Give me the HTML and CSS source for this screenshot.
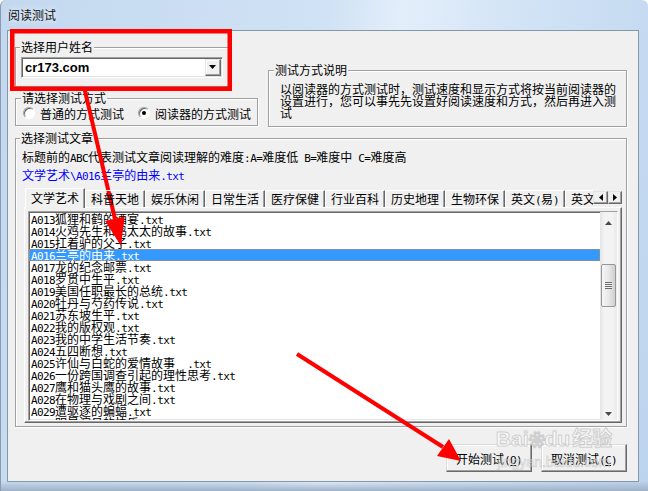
FILE: index.html
```
<!DOCTYPE html>
<html lang="zh-CN">
<head>
    <meta charset="UTF-8">
    <meta name="viewport" content="width=device-width, initial-scale=1.0">
    <title>阅读测试</title>
    <link rel="stylesheet" href="styles.css">
</head>
<body>
<div class="window">
    <div class="titlebar">阅读测试</div>
    <div class="client">
        <div class="top">
            <div class="left-col">
                <fieldset class="grp grp-user">
                    <legend>选择用户姓名</legend>
                    <div class="combo">
                        <span class="combo-text">cr173.com</span>
                        <span class="combo-btn">
                            <svg width="8" height="5" viewBox="0 0 8 5"><path d="M0 0h7L3.5 4z" fill="#000"/></svg>
                        </span>
                    </div>
                </fieldset>
                <fieldset class="grp grp-mode">
                    <legend>请选择测试方式</legend>
                    <div class="radios">
                        <label class="radio"><span class="dot"></span>普通的方式测试</label>
                        <label class="radio second"><span class="dot on"></span>阅读器的方式测试</label>
                    </div>
                </fieldset>
            </div>
            <fieldset class="grp grp-note">
                <legend>测试方式说明</legend>
                <p>以阅读器的方式测试时，测试速度和显示方式将按当前阅读器的设置进行，您可以事先先设置好阅读速度和方式，然后再进入测试</p>
            </fieldset>
        </div>

        <fieldset class="grp grp-article">
            <legend>选择测试文章</legend>
            <div class="hint">标题前的<span class="n">ABC</span>代表测试文章阅读理解的难度<span class="n">:A=</span>难度低<span class="n"> B=</span>难度中<span class="n"> C=</span>难度高</div>
            <div class="path">文学艺术<span class="n">\A016</span>兰亭的由来<span class="n">.txt</span></div>

            <div class="tabs-row">
                <div class="tabs">
                    <div class="tab active">文学艺术</div>
                    <div class="tab">科普天地</div>
                    <div class="tab">娱乐休闲</div>
                    <div class="tab">日常生活</div>
                    <div class="tab">医疗保健</div>
                    <div class="tab">行业百科</div>
                    <div class="tab">历史地理</div>
                    <div class="tab">生物环保</div>
                    <div class="tab">英文<span class="n">(</span>易<span class="n">)</span></div>
                    <div class="tab">英文<span class="n">(</span>难<span class="n">)</span></div>
                </div>
                <div class="spin">
                    <span class="spin-btn"><svg width="4" height="7" viewBox="0 0 4 7"><path d="M4 0v7L0 3.5z" fill="#000"/></svg></span>
                    <span class="spin-btn"><svg width="4" height="7" viewBox="0 0 4 7"><path d="M0 0v7l4-3.5z" fill="#000"/></svg></span>
                </div>
            </div>

            <div class="panel">
                <div class="list">
                    <ul class="items">
                        <li><span class="n">A013</span>狐狸和鹤的酒宴<span class="n">.txt</span></li>
                        <li><span class="n">A014</span>火鸡先生和鸡太太的故事<span class="n">.txt</span></li>
                        <li><span class="n">A015</span>扛着驴的父子<span class="n">.txt</span></li>
                        <li class="sel"><span class="n">A016</span>兰亭的由来<span class="n">.txt</span></li>
                        <li><span class="n">A017</span>龙的纪念邮票<span class="n">.txt</span></li>
                        <li><span class="n">A018</span>罗贯中生平<span class="n">.txt</span></li>
                        <li><span class="n">A019</span>美国任职最长的总统<span class="n">.txt</span></li>
                        <li><span class="n">A020</span>牡丹与芍药传说<span class="n">.txt</span></li>
                        <li><span class="n">A021</span>苏东坡生平<span class="n">.txt</span></li>
                        <li><span class="n">A022</span>我的版权观<span class="n">.txt</span></li>
                        <li><span class="n">A023</span>我的中学生活节奏<span class="n">.txt</span></li>
                        <li><span class="n">A024</span>五四断想<span class="n">.txt</span></li>
                        <li><span class="n">A025</span>许仙与白蛇的爱情故事<span class="n">&nbsp;&nbsp;.txt</span></li>
                        <li><span class="n">A026</span>一份跨国调查引起的理性思考<span class="n">.txt</span></li>
                        <li><span class="n">A027</span>鹰和猫头鹰的故事<span class="n">.txt</span></li>
                        <li><span class="n">A028</span>在物理与戏剧之间<span class="n">.txt</span></li>
                        <li><span class="n">A029</span>遭驱逐的蝙蝠<span class="n">.txt</span></li>
                        <li><span class="n">A030</span>明星演员的快乐<span class="n">.txt</span></li>
                    </ul>
                    <div class="vscroll">
                        <span class="sb-btn"><svg width="7" height="4" viewBox="0 0 7 4"><path d="M0 4h7L3.5 0z" fill="#4a4a4a"/></svg></span>
                        <span class="thumb"><span class="grip"></span></span>
                        <span class="sb-btn down"><svg width="7" height="4" viewBox="0 0 7 4"><path d="M0 0h7L3.5 4z" fill="#4a4a4a"/></svg></span>
                    </div>
                </div>
            </div>
        </fieldset>

        <div class="buttons">
            <button class="btn">开始测试<span class="n">(<u>O</u>)</span></button>
            <button class="btn">取消测试<span class="n">(<u>C</u>)</span></button>
        </div>
    </div>

    <!-- annotations drawn over the screenshot -->
    <svg class="marks" width="648" height="491" viewBox="0 0 648 491">
        <rect x="12.25" y="31.25" width="217.5" height="57.5" fill="none" stroke="#ff0000" stroke-width="4.5"/>
        <line x1="84.5" y1="89" x2="115" y2="219" stroke="#ff0000" stroke-width="4"/>
        <polygon points="121,246 124.7,216.5 105.1,220.9" fill="#ff0000"/>
        <line x1="297" y1="354" x2="443" y2="447" stroke="#ff0000" stroke-width="4"/>
        <polygon points="461,461 449,439 437,456" fill="#ff0000"/>
    </svg>

    <div class="wm">
        <div class="wm-big">Bai<span class="paw">❀</span>du<span class="wm-cn">经验</span></div>
        <div class="wm-small">jingyan.baidu.com</div>
    </div>
</div>
</body>
</html>
```

FILE: styles.css
```
body {
    margin: 0;
    font-family: "Noto Sans CJK SC", sans-serif;
    font-size: 12px;
    color: #000;
    background: #fff;
}
.window {
    position: relative;
    width: 648px;
    height: 491px;
    box-sizing: border-box;
    padding: 0 9px 9px 6px;
    border-left: 1px solid #8a9bb0;
    border-radius: 6px 6px 0 0;
    background:
        linear-gradient(to bottom, rgba(0,0,0,0) 481px, #9fb2c7 491px),
        linear-gradient(100deg, #c3d8ef 0%, #d0e2f5 45%, #e3eefa 55%, #d3e4f6 70%, #bdd4ee 100%);
}
.titlebar {
    height: 30px;
    line-height: 30px;
    padding-left: 1px;
    color: #111;
    text-shadow: 0 0 6px #fff;
}
.client {
    box-sizing: border-box;
    height: 452px;
    background: #f0f0f0;
    border: 1px solid #8597ab;
    padding: 9px 11px 0 7px;
}

/* group boxes */
.grp {
    margin: 0;
    min-width: 0;
    box-sizing: border-box;
    border: 1px solid #a0a0a0;
    box-shadow: inset 1px 1px #fff, 1px 1px #fff;
}
.grp legend {
    padding: 0 1px;
    line-height: 14px;
    background: #f0f0f0;
}
.top {
    display: flex;
    gap: 10px;
}
.left-col {
    width: 243px;
    display: flex;
    flex-direction: column;
    gap: 4px;
}
.grp-user {
    width: 214px;
    padding: 3px 5px 8px;
}
.grp-user legend {
    margin-left: -1px;
}
.combo {
    display: flex;
    align-items: center;
    height: 21px;
    box-sizing: border-box;
    padding: 1px;
    border: 1px solid;
    border-color: #a0a0a0 #fff #fff #a0a0a0;
    box-shadow: inset 1px 1px #696969, inset -1px -1px #e3e3e3;
    background: #fff;
}
.combo-text {
    flex: 1;
    padding-left: 2px;
    font: bold 13px "Liberation Sans", Arial, sans-serif;
}
.combo-btn {
    width: 16px;
    height: 17px;
    box-sizing: border-box;
    display: flex;
    align-items: center;
    justify-content: center;
    border: 1px solid;
    border-color: #e3e3e3 #696969 #696969 #e3e3e3;
    box-shadow: inset -1px -1px #a0a0a0, inset 1px 1px #fff;
    background: #f0f0f0;
}
.grp-mode {
    width: 243px;
    padding: 1px 6px 5px 7px;
}
.grp-mode legend {
    margin-left: -2px;
}
.radios {
    display: flex;
    align-items: center;
    height: 14px;
}
.radio {
    display: flex;
    align-items: center;
    gap: 5px;
}
.radio.second {
    margin-left: 14px;
}
.dot {
    position: relative;
    width: 12px;
    height: 12px;
    box-sizing: border-box;
    border-radius: 50%;
    border: 1px solid;
    border-color: #a0a0a0 #fff #fff #a0a0a0;
    box-shadow: inset 1px 1px #696969;
    background: #fff;
}
.dot.on::after {
    content: "";
    position: absolute;
    left: 3px;
    top: 3px;
    width: 4px;
    height: 4px;
    border-radius: 50%;
    background: #000;
}
.grp-note {
    width: 360px;
    margin-top: 23px;
    padding: 6px 8px 7px 11px;
}
.grp-note legend {
    margin-left: -6px;
}
.grp-note p {
    margin: 0;
    line-height: 12px;
}

/* article group */
.grp-article {
    margin-top: 4px;
    padding: 6px 4px 3px 6px;
}
.grp-article legend {
    margin-left: -2px;
}
.hint, .path {
    height: 12px;
    line-height: 12px;
    white-space: nowrap;
}
.path {
    margin-top: 6px;
    color: #0000ff;
}
.n {
    font-family: "DejaVu Sans Mono", "Liberation Mono", monospace;
    font-size: 11px;
    letter-spacing: -0.6px;
    line-height: 0;
}
.tabs-row {
    position: relative;
    z-index: 1;
    display: flex;
    height: 20px;
    margin: 7px 0 -1px 2px;
    width: 598px;
}
.tabs {
    flex: 1;
    min-width: 0;
    display: flex;
    align-items: flex-end;
    overflow: hidden;
}
.tab {
    flex-shrink: 0;
    width: 60px;
    height: 17px;
    margin-bottom: 1px;
    box-sizing: border-box;
    border: 1px solid;
    border-bottom: none;
    border-color: #fff #696969 #fff #fff;
    box-shadow: inset -1px 0 #a0a0a0;
    line-height: 16px;
    text-align: center;
    white-space: nowrap;
}
.tab.active {
    height: 20px;
    margin: 0 0 0 1px;
    line-height: 18px;
    background: #f0f0f0;
}
.spin {
    display: flex;
    margin-top: 3px;
    height: 13px;
}
.spin-btn {
    width: 15px;
    height: 13px;
    box-sizing: border-box;
    display: flex;
    align-items: center;
    justify-content: center;
    border: 1px solid;
    border-color: #e3e3e3 #696969 #696969 #e3e3e3;
    box-shadow: inset -1px -1px #a0a0a0;
    background: #f0f0f0;
}
.spin-btn + .spin-btn {
    width: 14px;
}
.panel {
    width: 598px;
    height: 216px;
    margin-left: 2px;
    box-sizing: border-box;
    padding: 3px 3px 1px;
    border: 1px solid;
    border-color: #fff #696969 #696969 #fff;
    box-shadow: inset -1px -1px #a0a0a0;
}
.list {
    display: flex;
    height: 210px;
    box-sizing: border-box;
    border: 1px solid;
    border-color: #a0a0a0 #fff #fff #a0a0a0;
    box-shadow: inset 1px 1px #696969, inset -1px -1px #e3e3e3;
    background: #fff;
}
.items {
    flex: 1;
    min-width: 0;
    margin: 0;
    padding: 1px 0 0;
    list-style: none;
    overflow: hidden;
}
.items li {
    height: 12px;
    line-height: 12px;
    padding-left: 2px;
    white-space: nowrap;
}
.items li.sel {
    background: #3399ff;
    color: #fff;
    outline: 1px dotted #c98a4a;
    outline-offset: -1px;
}
.vscroll {
    width: 17px;
    display: flex;
    flex-direction: column;
    background: linear-gradient(to right, #e4e4e4, #f3f3f3 25%, #f3f3f3 75%, #e8e8e8);
}
.sb-btn {
    height: 17px;
    display: flex;
    justify-content: center;
    padding-top: 9px;
    box-sizing: border-box;
}
.sb-btn.down {
    margin-top: auto;
}
.thumb {
    width: 15px;
    height: 43px;
    margin: 35px 0 0 1px;
    box-sizing: border-box;
    display: flex;
    align-items: center;
    justify-content: center;
    border: 1px solid #979797;
    border-radius: 2px;
    background: linear-gradient(to right, #f6f6f6, #e6e6e6 55%, #cfcfcf);
}
.grip {
    width: 7px;
    height: 7px;
    background: repeating-linear-gradient(to bottom, #6b6b6b 0 1px, #f4f4f4 1px 2px);
}

/* dialog buttons */
.buttons {
    display: flex;
    justify-content: flex-end;
    gap: 9px;
    margin-top: 17px;
}
.btn {
    width: 86px;
    height: 28px;
    padding: 0;
    font: inherit;
    color: #000;
    background: #f0f0f0;
    border: 1px solid;
    border-color: #dcdcdc #696969 #696969 #dcdcdc;
    box-shadow: inset -1px -1px #a0a0a0, inset 1px 1px #fff;
}

.marks {
    position: absolute;
    left: -1px;
    top: 0;
    pointer-events: none;
}
.wm {
    position: absolute;
    left: 494px;
    top: 425px;
    width: 118px;
    text-align: center;
    color: rgba(255, 255, 255, 0.55);
    -webkit-text-stroke: 1px rgba(160, 160, 160, 0.45);
    pointer-events: none;
}
.wm-big {
    font: bold 21px/26px "Liberation Sans", Arial, sans-serif;
    white-space: nowrap;
}
.paw {
    font-size: 16px;
}
.wm-cn {
    margin-left: 2px;
    font: bold 20px/26px "Noto Sans CJK SC", sans-serif;
}
.wm-small {
    font: 14px/16px "Liberation Sans", Arial, sans-serif;
    -webkit-text-stroke: 0.6px rgba(160, 160, 160, 0.5);
}
```
